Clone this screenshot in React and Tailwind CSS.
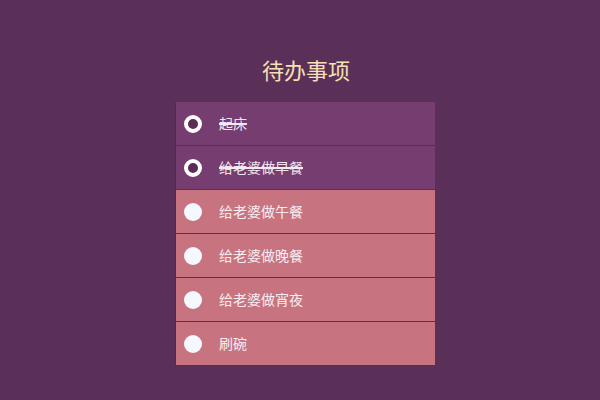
export default function App() {
  const items = [
    { t: "起床", done: true },
    { t: "给老婆做早餐", done: true },
    { t: "给老婆做午餐", done: false },
    { t: "给老婆做晚餐", done: false },
    { t: "给老婆做宵夜", done: false },
    { t: "刷碗", done: false },
  ];
  return (
    <div className="w-[600px] h-[400px] bg-[#5a3058] flex flex-col items-center" style={{ fontFamily: '"Noto Sans CJK SC", "Noto Sans", sans-serif' }}>
      <h1 className="mt-[52px] h-[34px] text-[22px] leading-[34px] text-[#f6e0b4] ml-[12px]">待办事项</h1>
      <ul className="mt-[16px] w-[260px] ml-[10px] border-l border-[#52294f]">
        {items.map((it, i) => (
          <li
            key={i}
            className={it.done ? "h-[44px] flex items-center border-b border-[#5b2d57] bg-[#763d71]" : "h-[44px] flex items-center border-b border-[#5b2d57] bg-[#c87480]"}
          >
            <span
              className={it.done ? "ml-[8px] w-[18px] h-[18px] rounded-full bg-[#5a2c56] border-[4px] border-white" : "ml-[8px] w-[18px] h-[18px] rounded-full bg-[#f6f8ff]"}
            />
            {it.done ? (
              <span className="ml-[17px] text-[14px] text-[#f1e6ef] line-through decoration-[#f4eaf2] decoration-[1.5px]">{it.t}</span>
            ) : (
              <span className="ml-[17px] text-[14px] text-[#f7ecf0]">{it.t}</span>
            )}
          </li>
        ))}
      </ul>
    </div>
  );
}
